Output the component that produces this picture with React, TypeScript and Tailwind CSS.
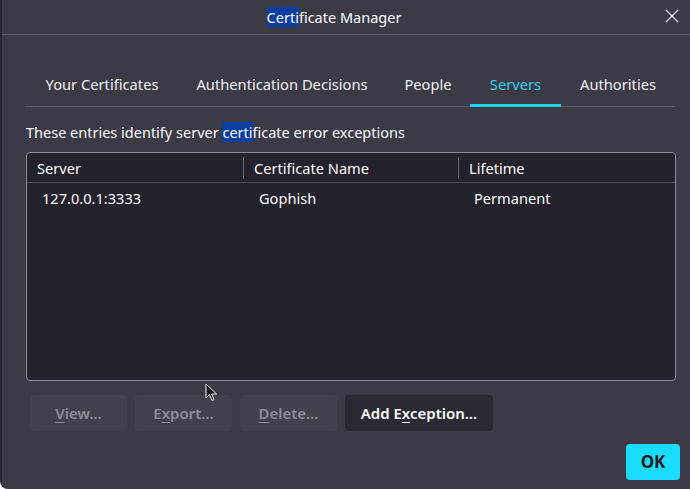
import { X } from 'lucide-react';

const tabs = [
  { label: 'Your Certificates', w: 'w-[152px]' },
  { label: 'Authentication Decisions', w: 'w-[208px]' },
  { label: 'People', w: 'w-[84px]' },
  { label: 'Servers', w: 'w-[91px]' },
  { label: 'Authorities', w: 'w-[114px]' },
];

const font = { fontFamily: '"Noto Sans", "Open Sans", sans-serif' };

// Underlined access key, like the GTK mnemonic letters
const Key = ({ children }: { children: string }) => (
  <span className="underline underline-offset-[3px] decoration-1">{children}</span>
);

export default function App() {
  return (
    <div
      className="relative w-[690px] h-[489px] bg-[#3b3a45] text-[#fbfbfe] border-l-2 border-[#2a2931] rounded-bl-lg flex flex-col overflow-hidden"
      style={font}
    >
      {/* Title bar */}
      <div className="h-[35px] shrink-0 flex items-center justify-center relative border-b border-[#5c5b66] pr-[24px]">
        <span className="text-[14.5px] leading-none">
          <span className="bg-[#0b3ea1]">Certi</span>ficate Manager
        </span>
        <X size={24} strokeWidth={1.1} className="absolute right-[6px] top-[4px] text-[#ececf0]" />
      </div>

      <div className="flex flex-col px-[24px] pt-[30px]">
        {/* Tabs */}
        <div className="flex border-b border-[#5c5b66] w-[649px]">
          {tabs.map((t) => (
            <div
              key={t.label}
              className={`${t.w} h-[42px] shrink-0 whitespace-nowrap flex items-center justify-center text-[14.7px] border-b-[3px] -mb-px ${
                t.label === 'Servers' ? 'border-[#1ad3f6] text-[#2fd0ef]' : 'border-transparent text-[#f0f0f4]'
              }`}
            >
              {t.label}
            </div>
          ))}
        </div>

        <div className="mt-[15px] text-[14.5px] leading-[20px]">
          These entries identify server <span className="bg-[#0b3ea1]">certi</span>ficate error exceptions
        </div>

        {/* Table */}
        <div className="mt-[10px] w-[650px] h-[229px] bg-[#24232b] border border-[#8c8b96] rounded-[4px] flex flex-col text-[14.6px]">
          <div className="h-[30px] flex items-center border-b border-[#4b4a54]">
            <div className="w-[217px] pl-[10px] border-r border-[#6b6a74] leading-[22px]">Server</div>
            <div className="w-[215px] pl-[10px] border-r border-[#6b6a74] leading-[22px]">Certificate Name</div>
            <div className="pl-[10px] leading-[22px]">Lifetime</div>
          </div>
          <div className="h-[32px] flex items-center">
            <div className="w-[217px] pl-[15px]">127.0.0.1:3333</div>
            <div className="w-[215px] pl-[15px]">Gophish</div>
            <div className="pl-[15px]">Permanent</div>
          </div>
        </div>

        {/* Buttons */}
        <div className="mt-[14px] ml-[4px] flex gap-2 text-[15px] font-semibold">
          <button className="w-[97px] h-[36px] rounded bg-[#42414c] text-[#8d8c96]">
            <Key>V</Key>iew…
          </button>
          <button className="w-[97px] h-[36px] rounded bg-[#42414c] text-[#8d8c96]">
            E<Key>x</Key>port…
          </button>
          <button className="w-[97px] h-[36px] rounded bg-[#42414c] text-[#8d8c96]">
            <Key>D</Key>elete…
          </button>
          <button className="w-[148px] h-[36px] rounded bg-[#2b2a33] text-[#fbfbfe]">
            Add E<Key>x</Key>ception…
          </button>
        </div>

        <div className="flex justify-end mt-[13px] -mr-[14px]">
          <button className="w-[54px] h-[36px] rounded bg-[#1adcff] text-[#1c1b22] text-[17px] font-bold">OK</button>
        </div>
      </div>

      {/* Mouse pointer */}
      <svg className="absolute left-[203px] top-[383px]" width="14" height="20" viewBox="0 0 14 20">
        <path d="M1 1 L1 15 L4.5 11.5 L7 17.5 L9 16.6 L6.6 11 L11.5 11 Z" fill="#1b1b1f" stroke="#f4f4f4" strokeWidth="1" />
      </svg>
    </div>
  );
}
